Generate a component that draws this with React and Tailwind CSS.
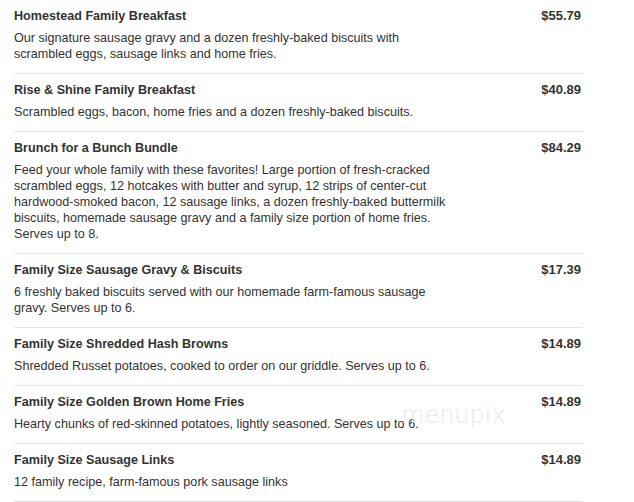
import React from "react";

const items = [
  {
    t: "Homestead Family Breakfast",
    p: "$55.79",
    d: "Our signature sausage gravy and a dozen freshly-baked biscuits with scrambled eggs, sausage links and home fries.",
  },
  {
    t: "Rise & Shine Family Breakfast",
    p: "$40.89",
    d: "Scrambled eggs, bacon, home fries and a dozen freshly-baked biscuits.",
  },
  {
    t: "Brunch for a Bunch Bundle",
    p: "$84.29",
    d: "Feed your whole family with these favorites! Large portion of fresh-cracked scrambled eggs, 12 hotcakes with butter and syrup, 12 strips of center-cut hardwood-smoked bacon, 12 sausage links, a dozen freshly-baked buttermilk biscuits, homemade sausage gravy and a family size portion of home fries. Serves up to 8.",
  },
  {
    t: "Family Size Sausage Gravy & Biscuits",
    p: "$17.39",
    d: "6 freshly baked biscuits served with our homemade farm-famous sausage gravy. Serves up to 6.",
  },
  {
    t: "Family Size Shredded Hash Browns",
    p: "$14.89",
    d: "Shredded Russet potatoes, cooked to order on our griddle. Serves up to 6.",
  },
  {
    t: "Family Size Golden Brown Home Fries",
    p: "$14.89",
    d: "Hearty chunks of red-skinned potatoes, lightly seasoned. Serves up to 6.",
  },
  {
    t: "Family Size Sausage Links",
    p: "$14.89",
    d: "12 family recipe, farm-famous pork sausage links",
  },
];

export default function App() {
  return (
    <div className="relative w-[634px] h-[502px] bg-white overflow-hidden font-['Liberation_Sans',Arial,sans-serif] text-[13px] text-[#333]">
      <div className="ml-[14px] w-[569px] flex flex-col">
        {items.map((it) => (
          <div key={it.t} className="flex justify-between border-b border-[#e6e6e6] pt-2 pb-[11px]">
            <div className="flex flex-col gap-[6px]">
              <div className="font-bold text-[12.6px] leading-4 text-[#333]">{it.t}</div>
              <div className="w-[434px] text-[12.6px] leading-4 text-[#333]">{it.d}</div>
            </div>
            <div className="font-bold text-[13px] leading-4 pr-[2px] text-[#333]">{it.p}</div>
          </div>
        ))}
      </div>
      <div className="absolute left-[401px] top-[403px] text-[24px] leading-none text-[#e8e8e8] font-['DejaVu_Sans',sans-serif] font-light select-none pointer-events-none">
        menupix
      </div>
    </div>
  );
}
